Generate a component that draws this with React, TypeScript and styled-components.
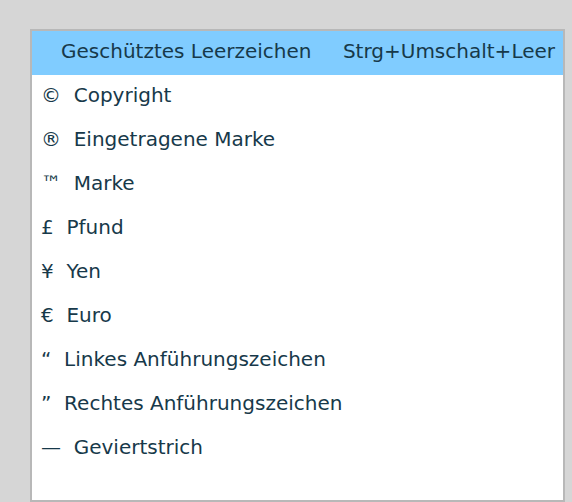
import * as React from 'react'
import styled, { createGlobalStyle } from 'styled-components'

const Global = createGlobalStyle`
    html, body {
        margin: 0;
        padding: 0;
        background: #d6d6d6;
    }
    body {
        font-family: "DejaVu Sans", Verdana, sans-serif;
    }
`

const Page = styled.div`
    width: 572px;
    height: 502px;
    padding: 29px 7px 0 30px;
    box-sizing: border-box;
    overflow: hidden;
`

const Panel = styled.div`
    height: 100%;
    background: #ffffff;
    border: 2px solid #b8b8b8;
    box-sizing: border-box;
    overflow: hidden;
`

const Row = styled.div<{ $active?: boolean }>`
    height: 44px;
    display: flex;
    align-items: center;
    justify-content: space-between;
    padding: 0 8px 4px 9px;
    box-sizing: border-box;
    background: ${p => (p.$active ? '#80ccff' : 'transparent')};
    color: #17394a;
    font-size: 20px;
    white-space: pre;
`

const Label = styled.span<{ $indent?: number }>`
    padding-left: ${p => p.$indent || 0}px;
`

const Shortcut = styled.span``

const items = [
    '©  Copyright',
    '®  Eingetragene Marke',
    '™  Marke',
    '£  Pfund',
    '¥  Yen',
    '€  Euro',
    '“  Linkes Anführungszeichen',
    '”  Rechtes Anführungszeichen',
    '—  Geviertstrich',
]

export default class App extends React.Component<{}, {}> {
    public render() {
        return <Page>
            <Global />
            <Panel>
                <Row $active={true}>
                    <Label $indent={20}>Geschütztes Leerzeichen</Label>
                    <Shortcut>Strg+Umschalt+Leer</Shortcut>
                </Row>
                {items.map(text => <Row key={text}><Label>{text}</Label></Row>)}
            </Panel>
        </Page>
    }
}
